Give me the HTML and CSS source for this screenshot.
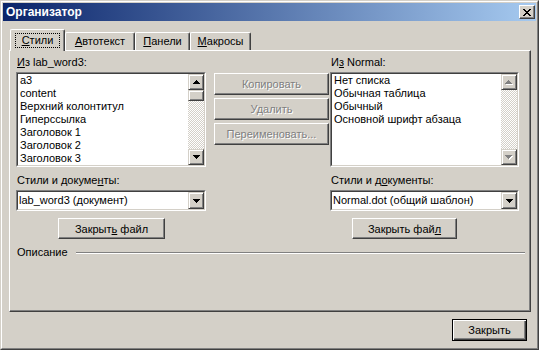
FILE: index.html
```html
<!DOCTYPE html>
<html lang="ru">
<head>
  <meta charset="UTF-8">
  <title>Организатор</title>
  <link rel="stylesheet" href="styles.css">
</head>
<body>

  <div class="window">
    <div class="frame">

      <div class="titlebar">
        <span class="caption">Организатор</span>
        <span class="close-box">
          <svg width="8" height="7" viewBox="0 0 8 7" shape-rendering="crispEdges">
            <path d="M0 0h2v1H0zM6 0h2v1H6zM1 1h2v1H1zM5 1h2v1H5zM2 2h4v1H2zM3 3h2v1H3zM2 4h4v1H2zM1 5h2v1H1zM5 5h2v1H5zM0 6h2v1H0zM6 6h2v1H6z"/>
          </svg>
        </span>
      </div>

      <div class="content">
        <div class="tabs">
          <div class="tab active tab-styles"><span class="focus"><u>С</u>тили</span></div>
          <div class="tab tab-auto"><u>А</u>втотекст</div>
          <div class="tab tab-bars"><u>П</u>анели</div>
          <div class="tab tab-macro"><u>М</u>акросы</div>
        </div>

        <div class="panel">
          <div class="cols">

            <!-- левая колонка -->
            <div class="col">
              <div class="label"><u>И</u>з lab_word3:</div>
              <div class="sunken list">
                <div class="sunken-in">
                  <div class="rows">
                    <div class="row">a3</div>
                    <div class="row">content</div>
                    <div class="row">Верхний колонтитул</div>
                    <div class="row">Гиперссылка</div>
                    <div class="row">Заголовок 1</div>
                    <div class="row">Заголовок 2</div>
                    <div class="row">Заголовок 3</div>
                  </div>
                  <div class="scrollbar">
                    <div class="sb-btn">
                      <svg width="7" height="4" viewBox="0 0 7 4" shape-rendering="crispEdges"><path d="M3 0h1v1h1v1h1v1h1v1H0V3h1V2h1V1h1z"/></svg>
                    </div>
                    <div class="sb-thumb"></div>
                    <div class="sb-track"></div>
                    <div class="sb-btn">
                      <svg width="7" height="4" viewBox="0 0 7 4" shape-rendering="crispEdges"><path d="M0 0h7v1H6v1H5v1H4v1H3V3H2V2H1V1H0z"/></svg>
                    </div>
                  </div>
                </div>
              </div>

              <div class="label label-docs">Стили и докуме<u>н</u>ты:</div>
              <div class="sunken combo">
                <div class="sunken-in">
                  <div class="combo-text">lab_word3 (документ)</div>
                  <div class="sb-btn combo-btn">
                    <svg width="7" height="4" viewBox="0 0 7 4" shape-rendering="crispEdges"><path d="M0 0h7v1H6v1H5v1H4v1H3V3H2V2H1V1H0z"/></svg>
                  </div>
                </div>
              </div>
              <button class="btn close-file close-left">Закрыт<u>ь</u> файл</button>
            </div>

            <!-- кнопки посередине -->
            <div class="mid">
              <button class="btn mid-btn" disabled>Копировать</button>
              <button class="btn mid-btn" disabled>Удалить</button>
              <button class="btn mid-btn" disabled>Переименовать...</button>
            </div>

            <!-- правая колонка -->
            <div class="col right">
              <div class="label">И<u>з</u> Normal:</div>
              <div class="sunken list">
                <div class="sunken-in">
                  <div class="rows">
                    <div class="row">Нет списка</div>
                    <div class="row">Обычная таблица</div>
                    <div class="row">Обычный</div>
                    <div class="row">Основной шрифт абзаца</div>
                  </div>
                  <div class="scrollbar">
                    <div class="sb-btn">
                      <svg width="8" height="5" viewBox="0 0 8 5" shape-rendering="crispEdges">
                        <path fill="#fff" d="M4 1h1v1h1v1h1v1h1v1H1V4h1V3h1V2h1z"/>
                        <path fill="#808080" d="M3 0h1v1h1v1h1v1h1v1H0V3h1V2h1V1h1z"/>
                      </svg>
                    </div>
                    <div class="sb-track"></div>
                    <div class="sb-btn">
                      <svg width="8" height="5" viewBox="0 0 8 5" shape-rendering="crispEdges">
                        <path fill="#fff" d="M1 1h7v1H7v1H6v1H5v1H4V4H3V3H2V2H1z"/>
                        <path fill="#808080" d="M0 0h7v1H6v1H5v1H4v1H3V3H2V2H1V1H0z"/>
                      </svg>
                    </div>
                  </div>
                </div>
              </div>

              <div class="label label-docs">Стили и д<u>о</u>кументы:</div>
              <div class="sunken combo">
                <div class="sunken-in">
                  <div class="combo-text">Normal.dot (общий шаблон)</div>
                  <div class="sb-btn combo-btn">
                    <svg width="7" height="4" viewBox="0 0 7 4" shape-rendering="crispEdges"><path d="M0 0h7v1H6v1H5v1H4v1H3V3H2V2H1V1H0z"/></svg>
                  </div>
                </div>
              </div>
              <button class="btn close-file close-right">Закрыть фай<u>л</u></button>
            </div>

          </div>

          <div class="description">
            <span>Описание</span>
            <div class="etched"></div>
          </div>
        </div>

        <div class="footer">
          <button class="btn default">Закрыть</button>
        </div>
      </div>

    </div>
  </div>

</body>
</html>
```

FILE: styles.css
```css
* {
  box-sizing: border-box;
}

body {
  margin: 0;
  font: 11px "Liberation Sans", Arial, sans-serif;
  color: #000;
}

u {
  text-underline-offset: 1px;
}

.window {
  width: 539px;
  height: 350px;
  background: #d4d0c8;
  border: 1px solid;
  border-color: #d4d0c8 #404040 #404040 #d4d0c8;
}

.frame {
  height: 100%;
  border: 1px solid;
  border-color: #fff #808080 #808080 #fff;
  padding: 1px;
  display: flex;
  flex-direction: column;
}

/* заголовок окна */
.titlebar {
  height: 18px;
  background: linear-gradient(to right, #0a246a, #a6caf0);
  display: flex;
  align-items: center;
  padding-left: 3px;
  color: #fff;
  font-weight: bold;
  font-size: 12px;
}

.caption {
  flex: 1;
}

.close-box {
  width: 16px;
  height: 14px;
  margin-right: 1px;
  background: #d4d0c8;
  border: 1px solid;
  border-color: #fff #404040 #404040 #fff;
  box-shadow: inset -1px -1px #808080;
  display: flex;
  align-items: center;
  justify-content: center;
}

.content {
  padding: 8px 5px 0 6px;
}

/* вкладки */
.tabs {
  display: flex;
  align-items: flex-end;
  height: 21px;
  padding-left: 1px;
}

.tab {
  height: 18px;
  border: 1px solid #fff;
  border-bottom: 0;
  border-right-color: #404040;
  border-radius: 2px 2px 0 0;
  box-shadow: inset -1px 0 #808080;
  text-align: center;
  padding-top: 2px;
  line-height: 13px;
}

.tab.active {
  height: 22px;
  margin-bottom: -1px;
  padding-top: 3px;
  background: #d4d0c8;
  position: relative;
  z-index: 1;
}

.tab-styles { width: 55px; }
.tab-auto { width: 70px; }
.tab-bars { width: 55px; }
.tab-macro { width: 61px; }

.focus {
  display: inline-block;
  padding: 1px 7px;
  outline: 1px dotted #000;
  outline-offset: -1px;
  line-height: 13px;
}

.panel {
  height: 262px;
  border: 1px solid #fff;
  border-right-color: #404040;
  border-bottom-color: #404040;
  box-shadow: inset -1px -1px #808080;
  padding: 5px 0 0 6px;
}

.cols {
  display: flex;
}

.col {
  width: 190px;
}

.col.right {
  width: 189px;
  margin-left: 1px;
}

.mid {
  width: 115px;
  margin-left: 8px;
  padding-top: 17px;
  display: flex;
  flex-direction: column;
}

.label {
  line-height: 13px;
  margin-bottom: 3px;
  padding-left: 1px;
}

.label-docs {
  margin-top: 7px;
}

/* утопленные поля */
.sunken {
  border: 1px solid;
  border-color: #808080 #fff #fff #808080;
  background: #fff;
}

.sunken-in {
  height: 100%;
  border: 1px solid;
  border-color: #404040 #d4d0c8 #d4d0c8 #404040;
  display: flex;
}

.list {
  height: 95px;
}

.rows {
  flex: 1;
  overflow: hidden;
}

.row {
  line-height: 13px;
  padding-left: 2px;
  white-space: nowrap;
}

.scrollbar {
  width: 16px;
  display: flex;
  flex-direction: column;
}

.sb-btn {
  height: 16px;
  flex: none;
  background: #d4d0c8;
  border: 1px solid;
  border-color: #d4d0c8 #404040 #404040 #d4d0c8;
  box-shadow: inset 1px 1px #fff, inset -1px -1px #808080;
  display: flex;
  align-items: center;
  justify-content: center;
}

.sb-thumb {
  height: 11px;
  flex: none;
  background: #d4d0c8;
  border: 1px solid;
  border-color: #d4d0c8 #404040 #404040 #d4d0c8;
  box-shadow: inset 1px 1px #fff, inset -1px -1px #808080;
}

.sb-track {
  flex: 1;
  background: repeating-conic-gradient(#fff 0 25%, #d4d0c8 0 50%) 0 0 / 2px 2px;
}

.combo {
  height: 21px;
}

.combo-text {
  flex: 1;
  line-height: 17px;
  padding-left: 1px;
  white-space: nowrap;
}

.combo-btn {
  width: 16px;
  height: 17px;
}

/* кнопки */
.btn {
  font: inherit;
  color: #000;
  padding: 0;
  height: 21px;
  background: #d4d0c8;
  border: 1px solid;
  border-color: #fff #404040 #404040 #fff;
  box-shadow: inset -1px -1px #808080;
}

.btn:disabled {
  color: #808080;
  text-shadow: 1px 1px 0 #fff;
}

.mid-btn {
  height: 22px;
  margin-bottom: 3px;
}

.close-file {
  display: block;
  margin-top: 7px;
}

.close-left {
  width: 107px;
  margin-left: 42px;
}

.close-right {
  width: 105px;
  margin-left: 22px;
}

.description {
  display: flex;
  align-items: center;
  margin-top: 7px;
  line-height: 13px;
  padding-left: 1px;
  padding-right: 5px;
}

.etched {
  flex: 1;
  height: 2px;
  margin-left: 8px;
  border-top: 1px solid #808080;
  border-bottom: 1px solid #fff;
}

.footer {
  display: flex;
  justify-content: flex-end;
  padding: 7px 4px 0 0;
}

.btn.default {
  width: 75px;
  height: 22px;
  border: 1px solid #000;
  box-shadow: inset 1px 1px #fff, inset -1px -1px #404040, inset -2px -2px #808080;
}
```
